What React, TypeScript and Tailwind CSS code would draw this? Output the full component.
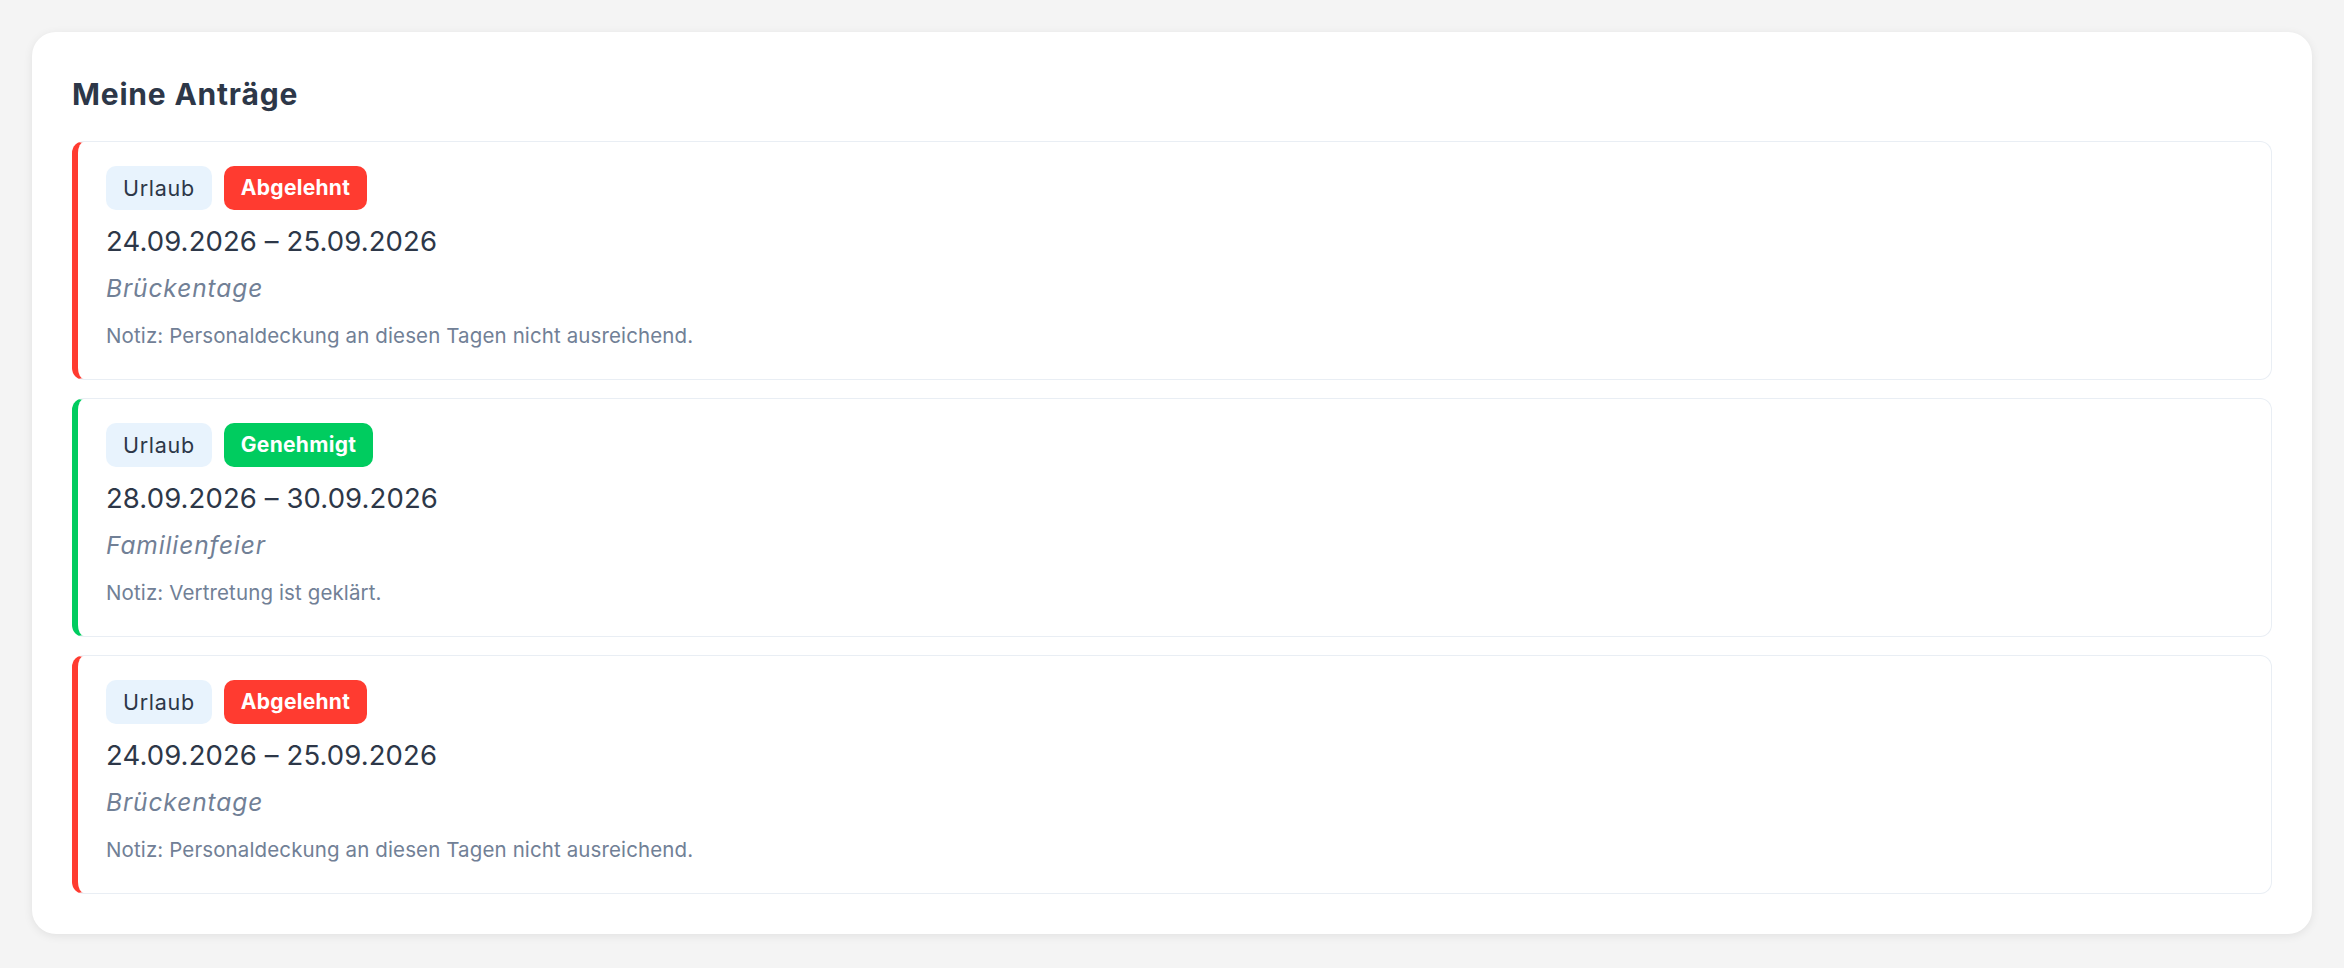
import React from "react";

type Antrag = {
  typ: string;
  status: "Abgelehnt" | "Genehmigt";
  von: string;
  bis: string;
  grund: string;
  notiz: string;
};

const antraege: Antrag[] = [
  {
    typ: "Urlaub",
    status: "Abgelehnt",
    von: "24.09.2026",
    bis: "25.09.2026",
    grund: "Brückentage",
    notiz: "Personaldeckung an diesen Tagen nicht ausreichend.",
  },
  {
    typ: "Urlaub",
    status: "Genehmigt",
    von: "28.09.2026",
    bis: "30.09.2026",
    grund: "Familienfeier",
    notiz: "Vertretung ist geklärt.",
  },
  {
    typ: "Urlaub",
    status: "Abgelehnt",
    von: "24.09.2026",
    bis: "25.09.2026",
    grund: "Brückentage",
    notiz: "Personaldeckung an diesen Tagen nicht ausreichend.",
  },
];

function AntragItem({ antrag }: { antrag: Antrag }) {
  const abgelehnt = antrag.status === "Abgelehnt";
  return (
    <div
      className={
        "rounded-[12px] border border-[#e9eef4] border-l-[6px] bg-white pl-[28px] pr-6 pt-[24px] pb-[28px] " +
        (abgelehnt ? "border-l-[#ff3b30]" : "border-l-[#00cc5f]")
      }
    >
      <div className="flex flex-row items-center gap-[12px]">
        <span className="rounded-[10px] bg-[#e8f3fd] px-[17px] py-[9px] text-[21.5px] leading-[26px] tracking-[0.7px] text-[#2d3748]">
          {antrag.typ}
        </span>
        <span
          className={
            "rounded-[10px] px-[17px] py-[9px] text-[21px] font-bold leading-[26px] tracking-[0.3px] text-white " +
            (abgelehnt ? "bg-[#ff3b30]" : "bg-[#00cc5f]")
          }
        >
          {antrag.status}
        </span>
      </div>
      <div className="mt-[11px] text-[27.5px] leading-[40px] tracking-[0.1px] text-[#2d3748]">
        {antrag.von} – {antrag.bis}
      </div>
      <div className="mt-[9px] text-[24.5px] italic leading-[36px] tracking-[0.9px] text-[#718096]">
        {antrag.grund}
      </div>
      <div className="mt-[15px] text-[20.5px] leading-[30px] tracking-[0.12px] text-[#718096]">
        Notiz: {antrag.notiz}
      </div>
    </div>
  );
}

export default function App() {
  return (
    <div className="min-h-screen bg-[#f4f4f4] p-[32px] font-['Inter',sans-serif]">
      <div className="rounded-[24px] bg-white p-[40px] shadow-[0_2px_10px_rgba(0,0,0,0.08)]">
        <h1 className="text-[30px] font-bold leading-[45px] tracking-[0.8px] text-[#2d3748]">
          Meine Anträge
        </h1>
        <div className="mt-[24px] flex flex-col gap-[18px]">
          {antraege.map((a, i) => (
            <AntragItem key={i} antrag={a} />
          ))}
        </div>
      </div>
    </div>
  );
}
